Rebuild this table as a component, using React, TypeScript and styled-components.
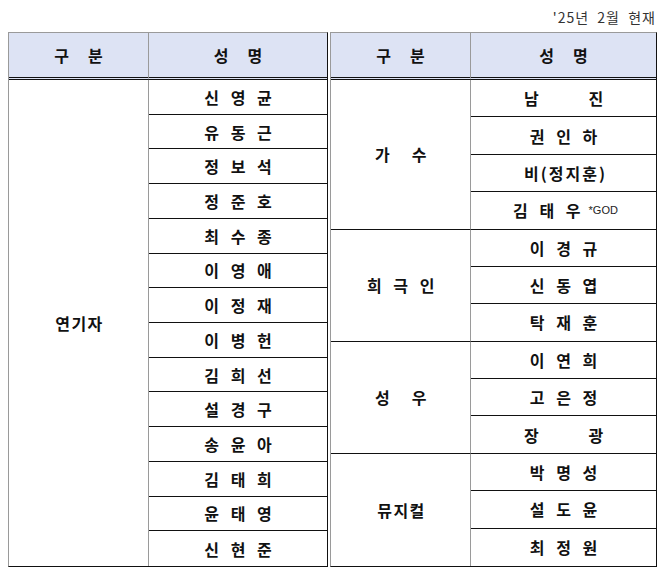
import React from 'react';
import styled, { createGlobalStyle } from 'styled-components';

const GlobalStyle = createGlobalStyle`
    html, body {
        margin: 0;
        padding: 0;
        background: #ffffff;
    }
    body {
        font-family: "Noto Sans CJK KR", "Noto Sans", sans-serif;
        color: #111;
    }
`

const Note = styled.span`
    font-family: "Liberation Sans", Arial, sans-serif;
    font-size: 11px;
    font-weight: 400;
    letter-spacing: 0;
    margin-left: 4px;
    color: #222;
`

const Tight = styled.span`
    letter-spacing: 2px;
`

type Group = {
    label: string
    names: React.ReactNode[]
}

const leftGroups: Group[] = [
    {
        label: '연기자',
        names: ['신 영 균', '유 동 근', '정 보 석', '정 준 호', '최 수 종', '이 영 애', '이 정 재',
            '이 병 헌', '김 희 선', '설 경 구', '송 윤 아', '김 태 희', '윤 태 영', '신 현 준'],
    },
]

const rightGroups: Group[] = [
    {
        label: '가    수',
        names: ['남      진', '권 인 하', <Tight>비(정지훈)</Tight>, <>김 태 우<Note>*GOD</Note></>],
    },
    { label: '희  극  인', names: ['이 경 규', '신 동 엽', '탁 재 훈'] },
    { label: '성    우', names: ['이 연 희', '고 은 정', '장      광'] },
    { label: '뮤지컬', names: ['박 명 성', '설 도 윤', '최 정 원'] },
]

const countRows = (groups: Group[]) => groups.reduce((n, g) => n + g.names.length, 0)

const StyledPage = styled.div`
    width: 670px;
    padding: 0 0 0 8px;
    box-sizing: border-box;
`

const Caption = styled.div`
    width: 648px;
    height: 32px;
    box-sizing: border-box;
    padding-top: 7px;
    text-align: right;
    font-size: 14px;
    line-height: 20px;
    color: #333;
    letter-spacing: 1px;
    white-space: pre;
`

const Tables = styled.div`
    display: flex;
    gap: 2px;
    align-items: flex-start;
`

const StyledTable = styled.div<{ $cols: string, $rows: number }>`
    display: grid;
    grid-template-columns: ${props => props.$cols};
    grid-template-rows: 47px repeat(${props => props.$rows}, 1fr);
    height: 535px;
    box-sizing: border-box;
    border-top: 1px solid #9a9a9a;
    border-left: 1px solid #9a9a9a;
    border-right: 1px solid #111;
    border-bottom: 1px solid #111;
`

const HeadCell = styled.div<{ $divider?: boolean }>`
    display: flex;
    align-items: center;
    justify-content: center;
    background-color: #dde3f4;
    border-bottom: 3px double #111;
    border-right: ${props => props.$divider ? '1px solid #9a9a9a' : 'none'};
    font-size: 16px;
    font-weight: 700;
    letter-spacing: 2px;
    padding-left: 2px;
    white-space: pre;
`

const LabelCell = styled.div<{ $start: number, $span: number, $last: boolean }>`
    grid-column: 1;
    grid-row: ${props => props.$start} / span ${props => props.$span};
    display: flex;
    align-items: center;
    justify-content: center;
    border-right: 1px solid #9a9a9a;
    border-bottom: ${props => props.$last ? 'none' : '1px solid #111'};
    font-size: 16px;
    font-weight: 700;
    letter-spacing: 1.5px;
    padding-left: 2px;
    white-space: pre;
`

const NameCell = styled.div<{ $last: boolean }>`
    grid-column: 2;
    display: flex;
    align-items: center;
    justify-content: center;
    border-bottom: ${props => props.$last ? 'none' : '1px solid #111'};
    font-size: 16px;
    font-weight: 700;
    letter-spacing: 4px;
    padding-left: 4px;
    white-space: pre;
`

const NameTable = ({ groups, cols }: { groups: Group[], cols: string }) => {
    const total = countRows(groups)
    let row = 2
    return (
        <StyledTable $cols={cols} $rows={total}>
            <HeadCell $divider>{'구   분'}</HeadCell>
            <HeadCell>{'성   명'}</HeadCell>
            {groups.map((g, gi) => {
                const start = row
                row += g.names.length
                const lastGroup = gi === groups.length - 1
                return (
                    <React.Fragment key={g.label}>
                        <LabelCell $start={start} $span={g.names.length} $last={lastGroup}>
                            {g.label}
                        </LabelCell>
                        {g.names.map((n, i) => (
                            <NameCell key={i} $last={start + i === total + 1}>{n}</NameCell>
                        ))}
                    </React.Fragment>
                )
            })}
        </StyledTable>
    )
}

export default function App() {
    return (
        <>
            <GlobalStyle />
            <StyledPage>
                <Caption>{"'25년  2월  현재"}</Caption>
                <Tables>
                    <NameTable groups={leftGroups} cols="140px 178px" />
                    <NameTable groups={rightGroups} cols="140px 185px" />
                </Tables>
            </StyledPage>
        </>
    )
}
